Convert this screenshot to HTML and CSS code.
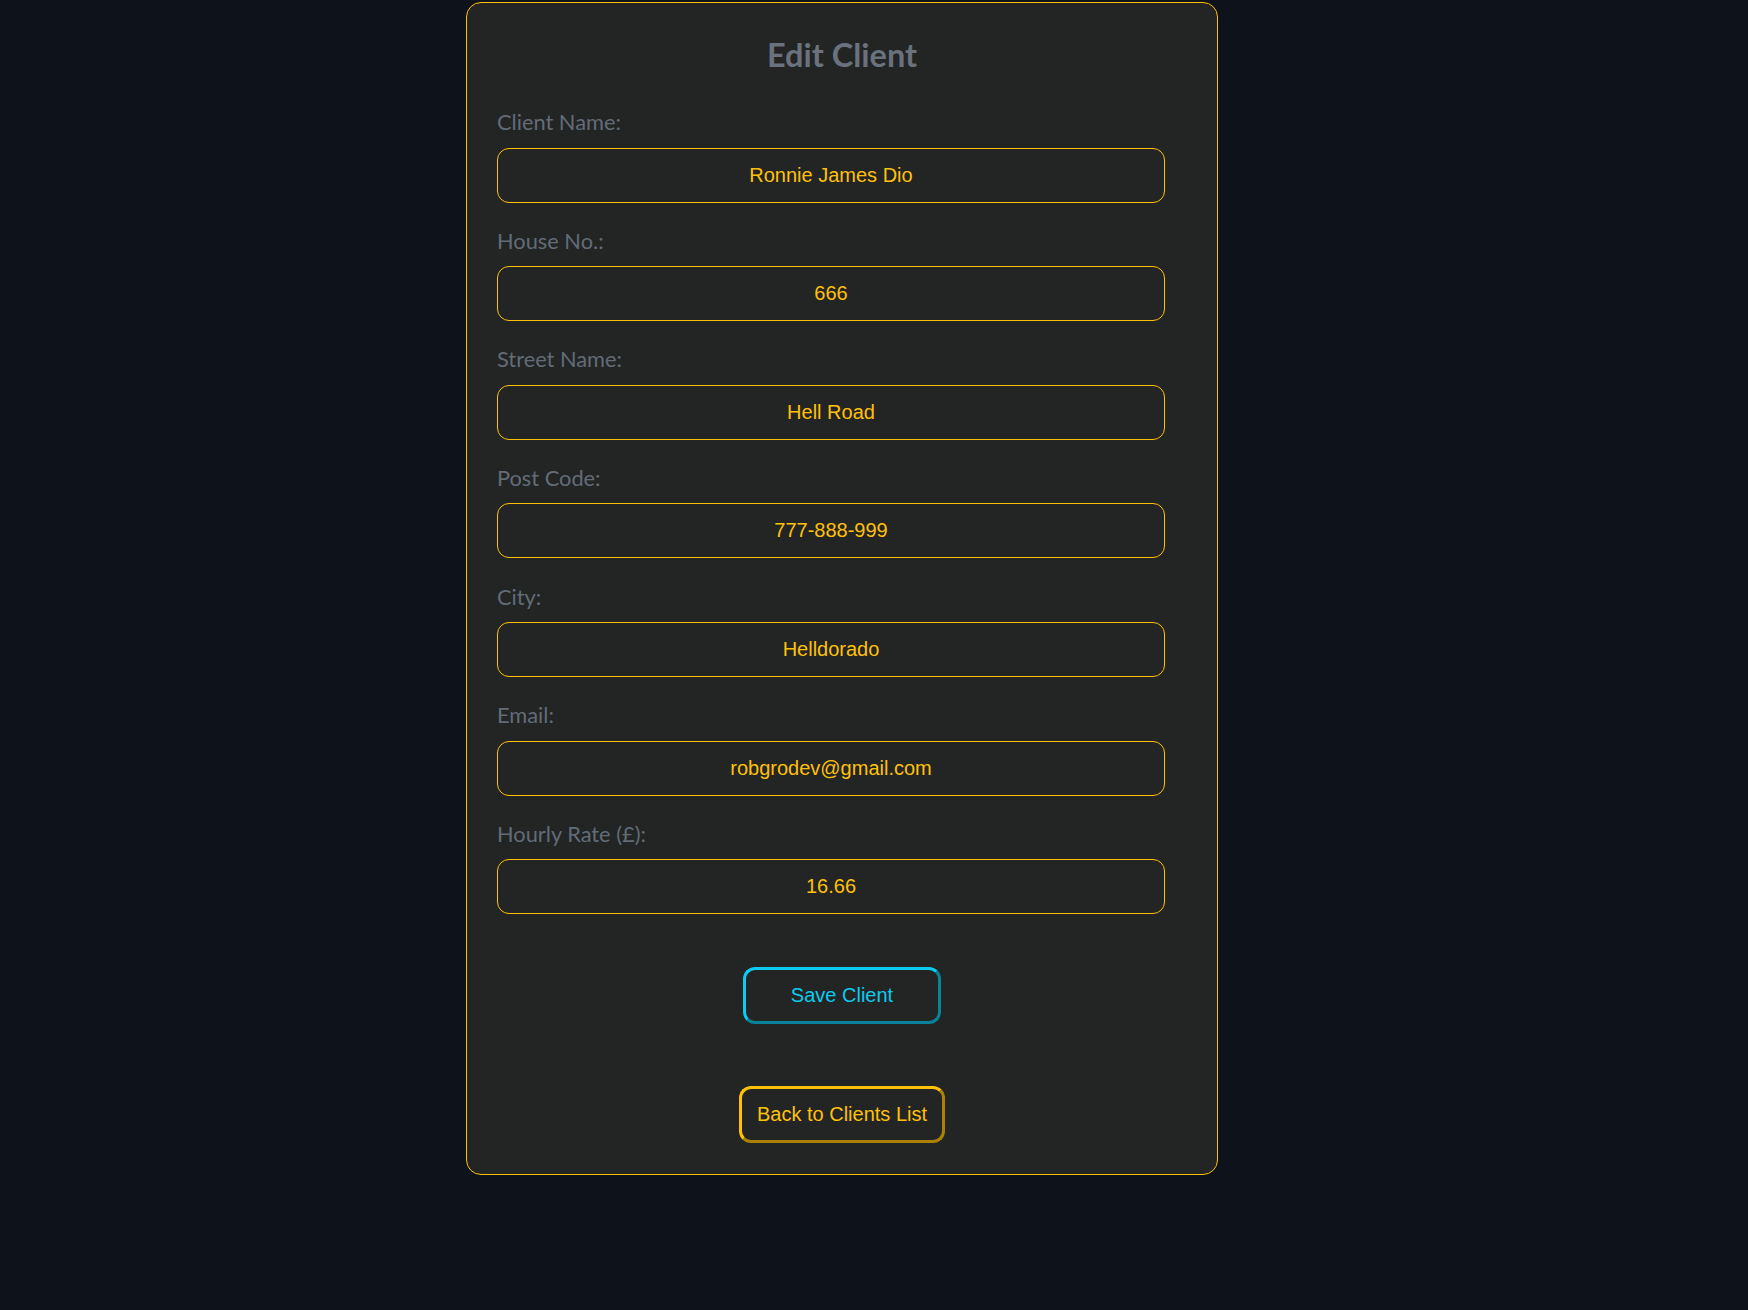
FILE: index.html
```html
<!DOCTYPE html>
<html lang="en">
<head>
<meta charset="utf-8">
<title>Edit Client</title>
<link rel="stylesheet" href="styles.css">
</head>
<body>
<main class="page">
  <form class="card">
    <h2 class="card-title">Edit Client</h2>
    <div class="field">
      <label class="field-label">Client Name:</label>
      <input class="field-input" type="text" value="Ronnie James Dio">
    </div>
    <div class="field">
      <label class="field-label">House No.:</label>
      <input class="field-input" type="text" value="666">
    </div>
    <div class="field">
      <label class="field-label">Street Name:</label>
      <input class="field-input" type="text" value="Hell Road">
    </div>
    <div class="field">
      <label class="field-label">Post Code:</label>
      <input class="field-input" type="text" value="777-888-999">
    </div>
    <div class="field">
      <label class="field-label">City:</label>
      <input class="field-input" type="text" value="Helldorado">
    </div>
    <div class="field">
      <label class="field-label">Email:</label>
      <input class="field-input" type="text" value="robgrodev@gmail.com">
    </div>
    <div class="field">
      <label class="field-label">Hourly Rate (£):</label>
      <input class="field-input" type="text" value="16.66">
    </div>
    <div class="actions">
      <button class="btn btn-save" type="button">Save Client</button>
      <button class="btn btn-back" type="button">Back to Clients List</button>
    </div>
  </form>
</main>
</body>
</html>
```
FILE: styles.css
```css
* { box-sizing: border-box; }
html, body { margin: 0; padding: 0; }
body {
  background: #0e121a;
  font-family: Lato, "Open Sans", sans-serif;
}
.page {
  display: flex;
  justify-content: center;
  padding: 2px 64px 0 0;
}
.card {
  width: 752px;
  height: 1173px;
  background: #232424;
  border: 1px solid #ffc107;
  border-radius: 15px;
  padding: 32px 30px 30px 30px;
  display: flex;
  flex-direction: column;
}
.card-title {
  margin: 0 0 35.2px 0;
  text-align: center;
  font-size: 32.5px;
  line-height: 39px;
  font-weight: 700;
  color: #69727d;
}
.field {
  display: flex;
  flex-direction: column;
  margin-bottom: 25.1px;
}
.field-label {
  font-size: 21.8px;
  line-height: 25px;
  color: #626c77;
  margin-bottom: 13.5px;
}
.field-input {
  width: calc(100% - 22px);
  height: 55px;
  border: 1px solid #ffc107;
  border-radius: 12px;
  background: transparent;
  color: #ffc107;
  font-family: "Liberation Sans", Arial, sans-serif;
  font-size: 20px;
  text-align: center;
  padding: 0 10px;
  outline: none;
}
.actions {
  display: flex;
  flex-direction: column;
  align-items: center;
  gap: 62px;
  margin-top: 27.5px;
}
.btn {
  font-family: "Liberation Sans", Arial, sans-serif;
  font-size: 20px;
  line-height: 23px;
  background: transparent;
  border-width: 3px;
  border-style: outset;
  border-radius: 12px;
  padding: 14px 14.5px;
}
.btn-save {
  color: #0dcaf0;
  border-color: #0dcaf0;
  padding: 14px 45px;
}
.btn-back {
  color: #ffc107;
  border-color: #ffc107;
}
```
